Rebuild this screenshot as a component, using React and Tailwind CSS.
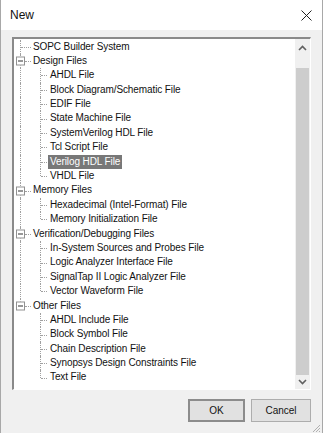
import React from 'react';

const tree = [
  { label: 'SOPC Builder System' },
  {
    label: 'Design Files',
    children: [
      'AHDL File',
      'Block Diagram/Schematic File',
      'EDIF File',
      'State Machine File',
      'SystemVerilog HDL File',
      'Tcl Script File',
      'Verilog HDL File',
      'VHDL File',
    ],
  },
  {
    label: 'Memory Files',
    children: ['Hexadecimal (Intel-Format) File', 'Memory Initialization File'],
  },
  {
    label: 'Verification/Debugging Files',
    children: [
      'In-System Sources and Probes File',
      'Logic Analyzer Interface File',
      'SignalTap II Logic Analyzer File',
      'Vector Waveform File',
    ],
  },
  {
    label: 'Other Files',
    children: [
      'AHDL Include File',
      'Block Symbol File',
      'Chain Description File',
      'Synopsys Design Constraints File',
      'Text File',
    ],
  },
];

const selected = 'Verilog HDL File';

// dotted guide lines, drawn per row
function VLine({ left, half }) {
  return (
    <div
      className={`absolute top-0 w-0 border-l border-dotted border-[#a0a0a0] ${half ? 'h-1/2' : 'h-full'}`}
      style={{ left }}
    />
  );
}

function HLine({ left, width }) {
  return (
    <div
      className="absolute top-1/2 h-0 border-t border-dotted border-[#a0a0a0]"
      style={{ left, width }}
    />
  );
}

function Expander() {
  return (
    <div className="absolute left-[2px] top-1/2 -translate-y-1/2 w-[9px] h-[9px] border border-[#919191] bg-white flex items-center justify-center">
      <div className="w-[5px] h-px bg-[#333]" />
    </div>
  );
}

function RootRow({ item, last }) {
  const hasKids = !!item.children;
  return (
    <div className="relative h-[14.4px]">
      <VLine left={6} half={last} />
      <HLine left={hasKids ? 11 : 7} width={hasKids ? 6 : 10} />
      {hasKids && <Expander />}
      <span className="absolute left-[19px] top-0 leading-[14.4px] whitespace-nowrap">{item.label}</span>
    </div>
  );
}

function ChildRow({ label, parentLast, last }) {
  const sel = label === selected;
  return (
    <div className="relative h-[14.4px]">
      {!parentLast && <VLine left={6} />}
      <VLine left={26} half={last} />
      <HLine left={27} width={6} />
      <span
        className={`absolute left-[34px] top-0 leading-[14.4px] px-[2px] whitespace-nowrap ${sel ? 'bg-[#787878] text-white' : ''}`}
      >
        {label}
      </span>
    </div>
  );
}

function Chevron({ up }) {
  return (
    <svg width="9" height="6" viewBox="0 0 9 6">
      <path
        d={up ? 'M1 5 L4.5 1.5 L8 5' : 'M1 1 L4.5 4.5 L8 1'}
        fill="none"
        stroke="#606060"
        strokeWidth="1.6"
      />
    </svg>
  );
}

export default function App() {
  return (
    <div className="w-[323px] h-[433px] flex flex-col bg-[#f0f0f0] border-x border-[#a8a8a8] font-['Liberation_Sans',Arial,sans-serif] text-black">
      {/* title bar */}
      <div className="h-[30px] bg-white flex items-center justify-between pl-[9px] pr-[10px]">
        <span className="text-[12px] text-[#111]">New</span>
        <svg width="11" height="11" viewBox="0 0 11 11">
          <path d="M0.5 0.5 L10.5 10.5 M10.5 0.5 L0.5 10.5" stroke="#222" strokeWidth="1" />
        </svg>
      </div>

      {/* body */}
      <div className="flex-1 flex flex-col px-[11px] pt-[7px]">
        <div className="h-[353px] flex border-t-2 border-l-2 border-t-[#8a8a8a] border-l-[#8a8a8a] border-r border-b border-r-white border-b-white bg-white">
          <div className="flex-1 pt-[0.5px] text-[10px] tracking-[-0.1px] text-[#111] overflow-hidden">
            {tree.map((item, i) => {
              const last = i === tree.length - 1;
              return (
                <React.Fragment key={item.label}>
                  <RootRow item={item} last={last} />
                  {item.children &&
                    item.children.map((c, j) => (
                      <ChildRow
                        key={c}
                        label={c}
                        parentLast={last}
                        last={j === item.children.length - 1}
                      />
                    ))}
                </React.Fragment>
              );
            })}
          </div>
          {/* scrollbar */}
          <div className="w-[15px] bg-[#f0f0f0] flex flex-col">
            <div className="h-[17px] flex items-center justify-center">
              <Chevron up />
            </div>
            <div className="flex-1 pt-[12px] px-px">
              <div className="h-full bg-[#cdcdcd]" />
            </div>
            <div className="h-[14px] flex items-center justify-center">
              <Chevron />
            </div>
          </div>
        </div>

        {/* buttons */}
        <div className="flex justify-end gap-[6px] mt-[9px]">
          <button className="w-[57px] h-[23px] bg-[#e1e1e1] border-2 border-[#8c8c8c] text-[10px] text-[#111]">
            OK
          </button>
          <button className="w-[60px] h-[23px] bg-[#e1e1e1] border border-[#adadad] text-[10px] text-[#111]">
            Cancel
          </button>
        </div>
        <div className="flex-1 flex items-end justify-end -mr-[10px]">
          <svg width="10" height="10" viewBox="0 0 10 10">
            <path d="M9 2 L2 9 M9 5 L5 9 M9 8 L8 9" stroke="#b0b0b0" strokeWidth="1" />
          </svg>
        </div>
      </div>
    </div>
  );
}
